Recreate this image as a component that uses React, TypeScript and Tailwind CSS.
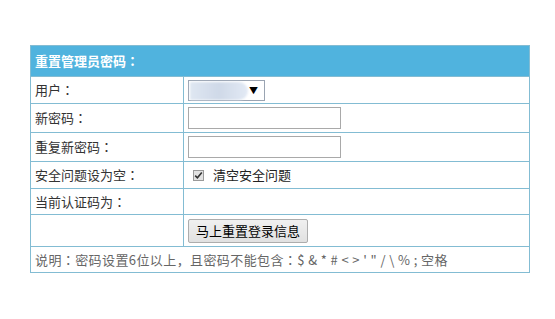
import React from 'react';

const font = { fontFamily: '"Noto Sans CJK SC", "Microsoft YaHei", sans-serif' };

const cell = "border border-[#83bcd3] px-[4px] align-middle";

// full-width colon centred in its box, as the reference font draws it
const Colon = () => <span className="font-['Noto_Sans_CJK_JP',sans-serif]">：</span>;

export default function App() {
  return (
    <div className="w-[555px] h-[319px] bg-white pt-[45px] pl-[30px]" style={font}>
      <table className="w-[500px] border-collapse text-[13px] text-[#333]">
        <tbody>
          <tr className="h-[31px]">
            <td colSpan={2} className="border border-[#83bcd3] bg-[#50b3de] px-[4px] font-bold text-white">
              重置管理员密码<Colon />
            </td>
          </tr>
          <tr className="h-[27px]">
            <td className={`${cell} w-[153px]`}>用户<Colon /></td>
            <td className={cell}>
              <div className="relative flex h-[21px] w-[77px] items-center justify-end border border-[#9aa4b2] bg-white pr-[6px]">
                <div className="absolute left-[1px] top-[1px] h-[18px] w-[58px] rounded-r-full bg-gradient-to-r from-[#dfe7f2] via-[#cfd9e8] to-[#e3eaf5] blur-[1px]" />
                <span className="text-[9px] leading-none text-black">▼</span>
              </div>
            </td>
          </tr>
          <tr className="h-[29px]">
            <td className={cell}>新密码<Colon /></td>
            <td className={cell}>
              <div className="h-[22px] w-[153px] border border-[#a9a9a9] bg-white" />
            </td>
          </tr>
          <tr className="h-[29px]">
            <td className={cell}>重复新密码<Colon /></td>
            <td className={cell}>
              <div className="h-[22px] w-[153px] border border-[#a9a9a9] bg-white" />
            </td>
          </tr>
          <tr className="h-[27px]">
            <td className={cell}>安全问题设为空<Colon /></td>
            <td className={cell}>
              <div className="flex items-center pl-[5px]">
                <span className="flex h-[11px] w-[11px] items-center justify-center border border-[#9a9a9a] bg-[#e2e2e2]">
                  <svg width="9" height="9" viewBox="0 0 9 9">
                    <path d="M1.2 4.6 L3.4 6.8 L7.8 1.6" fill="none" stroke="#333" strokeWidth="1.6" />
                  </svg>
                </span>
                <span className="ml-[9px] text-[#222]">清空安全问题</span>
              </div>
            </td>
          </tr>
          <tr className="h-[26px]">
            <td className={cell}>当前认证码为<Colon /></td>
            <td className={cell}></td>
          </tr>
          <tr className="h-[32px]">
            <td className={cell}></td>
            <td className={cell}>
              <button className="flex h-[24px] w-[120px] items-center justify-center rounded-[2px] border border-[#adadad] bg-gradient-to-b from-[#f0f0f0] to-[#e1e1e1] text-[13px] text-black">
                马上重置登录信息
              </button>
            </td>
          </tr>
          <tr className="h-[26px]">
            <td colSpan={2} className={`${cell} tracking-[0.4px] text-[#666]`}>
              说明<Colon />密码设置6位以上，且密码不能包含<Colon />$ &amp; * # &lt; &gt; ' " / \ % ; 空格
            </td>
          </tr>
        </tbody>
      </table>
    </div>
  );
}
